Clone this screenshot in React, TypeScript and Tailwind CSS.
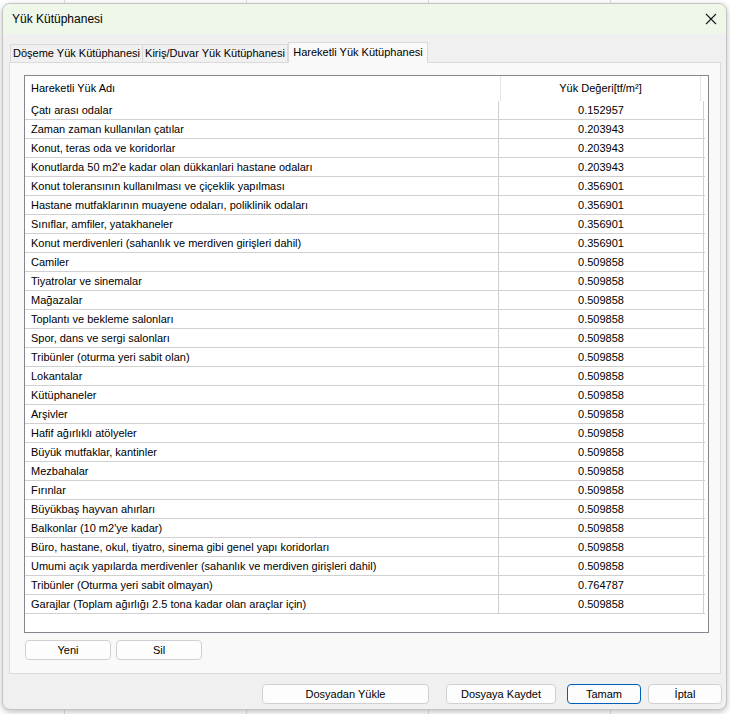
import React from 'react';

const rows: [string, string][] = [
  ['Çatı arası odalar', '0.152957'],
  ['Zaman zaman kullanılan çatılar', '0.203943'],
  ['Konut, teras oda ve koridorlar', '0.203943'],
  ["Konutlarda 50 m2'e kadar olan dükkanlari hastane odaları", '0.203943'],
  ['Konut toleransının kullanılması ve çiçeklik yapılması', '0.356901'],
  ['Hastane mutfaklarının muayene odaları, poliklinik odaları', '0.356901'],
  ['Sınıflar, amfiler, yatakhaneler', '0.356901'],
  ['Konut merdivenleri (sahanlık ve merdiven girişleri dahil)', '0.356901'],
  ['Camiler', '0.509858'],
  ['Tiyatrolar ve sinemalar', '0.509858'],
  ['Mağazalar', '0.509858'],
  ['Toplantı ve bekleme salonları', '0.509858'],
  ['Spor, dans ve sergi salonları', '0.509858'],
  ['Tribünler (oturma yeri sabit olan)', '0.509858'],
  ['Lokantalar', '0.509858'],
  ['Kütüphaneler', '0.509858'],
  ['Arşivler', '0.509858'],
  ['Hafif ağırlıklı atölyeler', '0.509858'],
  ['Büyük mutfaklar, kantinler', '0.509858'],
  ['Mezbahalar', '0.509858'],
  ['Fırınlar', '0.509858'],
  ['Büyükbaş hayvan ahırları', '0.509858'],
  ["Balkonlar (10 m2'ye kadar)", '0.509858'],
  ['Büro, hastane, okul, tiyatro, sinema gibi genel yapı koridorları', '0.509858'],
  ['Umumi açık yapılarda merdivenler (sahanlık ve merdiven girişleri dahil)', '0.509858'],
  ['Tribünler (Oturma yeri sabit olmayan)', '0.764787'],
  ['Garajlar (Toplam ağırlığı 2.5 tona kadar olan araçlar için)', '0.509858'],
];

const tabs = ['Döşeme Yük Kütüphanesi', 'Kiriş/Duvar Yük Kütüphanesi', 'Hareketli Yük Kütüphanesi'];

function Button({ label, className = '', focused = false }: { label: string; className?: string; focused?: boolean }) {
  return (
    <button
      className={`h-[20px] rounded-[4px] bg-[#fdfdfd] text-black leading-none ${
        focused ? 'border border-[#005fb8]' : 'border border-[#d0d0d0]'
      } ${className}`}
    >
      {label}
    </button>
  );
}

export default function App() {
  return (
    <div className="w-[730px] h-[714px] bg-white bg-[repeating-linear-gradient(90deg,transparent_0_64px,#dedede_64px_65px,transparent_65px_182px)] pt-[3px] pl-[2px] pr-[3px] pb-[4px] font-['Liberation_Sans',Arial,sans-serif] text-[11px] text-black">
      <div className="h-full flex flex-col rounded-lg overflow-hidden border border-[#c4c4c4] shadow-[0_2px_6px_rgba(0,0,0,0.25)] bg-[#f0f0f0]">
        {/* title bar */}
        <div className="h-[30px] shrink-0 bg-[#eef7e8] flex items-center justify-between pl-[9px] pr-[8px]">
          <span className="text-[12px]">Yük Kütüphanesi</span>
          <svg width="12" height="12" viewBox="0 0 12 12" className="mr-[1px]">
            <path d="M1 1L11 11M11 1L1 11" stroke="#1a1a1a" strokeWidth="1.1" />
          </svg>
        </div>

        <div className="flex-1 flex flex-col px-[6px] pt-[8px]">
          {/* tabs */}
          <div className="flex items-end pl-[1px] h-[20px]">
            {tabs.map((t, i) =>
              i === 2 ? (
                <div
                  key={t}
                  className="h-[21px] w-[140px] -mb-[1px] relative z-10 border border-b-0 border-[#dadada] bg-[#f9f9f9] flex items-center justify-center pb-[1px]"
                >
                  {t}
                </div>
              ) : (
                <div
                  key={t}
                  className={`h-[18px] border border-b-0 border-[#dadada] bg-[#f0f0f0] flex items-center justify-center ${
                    i === 0 ? 'w-[133px]' : 'w-[146px] -ml-[1px]'
                  }`}
                >
                  {t}
                </div>
              )
            )}
          </div>

          {/* panel */}
          <div className="w-[712px] h-[612px] border border-[#dadada] bg-[#f9f9f9] pt-[12px] pl-[14px] pr-[11px] flex flex-col">
            <div className="h-[558px] border border-[#828790] bg-white flex flex-col">
              <div className="h-[25px] shrink-0 grid grid-cols-[476px_200px_1fr]">
                <div className="flex items-center pl-[6px] border-r border-[#e5e5e5]">Hareketli Yük Adı</div>
                <div className="flex items-center justify-center border-r border-[#e5e5e5]">Yük Değeri[tf/m²]</div>
                <div />
              </div>
              {rows.map(([name, value]) => (
                <div key={name} className="h-[19px] shrink-0 grid grid-cols-[474px_205px] border-b border-[#d0d0d0] w-[680px]">
                  <div className="flex items-center pl-[6px] border-r border-[#d0d0d0] whitespace-nowrap overflow-hidden">{name}</div>
                  <div className="flex items-center justify-center border-r border-[#d0d0d0]">{value}</div>
                </div>
              ))}
            </div>

            <div className="flex gap-[5px] mt-[7px] pl-[1px]">
              <Button label="Yeni" className="w-[86px]" />
              <Button label="Sil" className="w-[86px]" />
            </div>
          </div>

          {/* footer buttons */}
          <div className="flex justify-end items-center mt-[10px] -mr-[2px]">
            <Button label="Dosyadan Yükle" className="w-[167px] mr-[17px]" />
            <Button label="Dosyaya Kaydet" className="w-[110px] mr-[11px]" />
            <Button label="Tamam" focused className="w-[74px] mr-[7px]" />
            <Button label="İptal" className="w-[74px]" />
          </div>
        </div>
      </div>
    </div>
  );
}
